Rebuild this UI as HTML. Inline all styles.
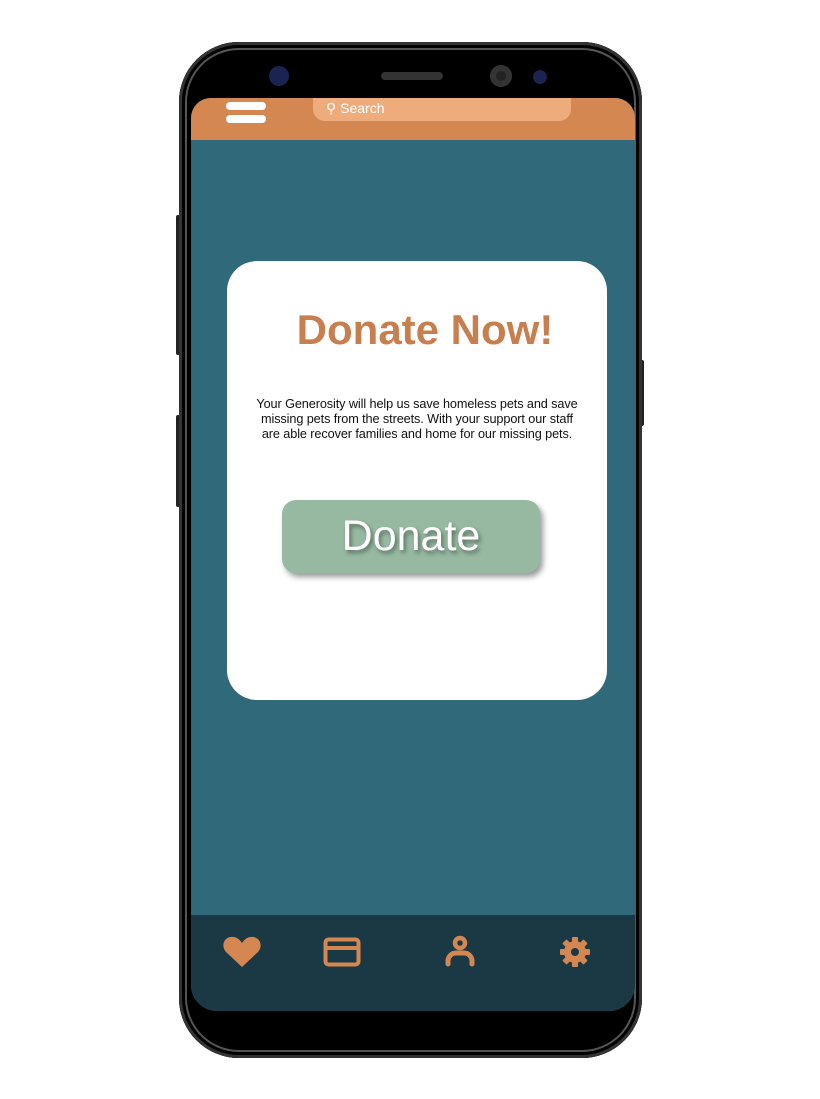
<!DOCTYPE html>
<html><head><style>
body{margin:0;width:820px;height:1099px;background:#fff;position:relative;overflow:hidden;font-family:"Liberation Sans",Arial,sans-serif}
.a{position:absolute}
</style></head><body>
<div class="a" style="left:176px;top:215px;width:6px;height:140px;background:#222;border-radius:2px"></div>
<div class="a" style="left:176px;top:415px;width:6px;height:92px;background:#222;border-radius:2px"></div>
<div class="a" style="left:638px;top:360px;width:6px;height:66px;background:#222;border-radius:2px"></div>
<div class="a" style="left:179px;top:42px;width:463px;height:1016px;background:#000;border-radius:60px;box-shadow:inset 0 0 0 3px #333,inset 0 0 0 6px #000,inset 0 0 0 8px #555"></div>
<div class="a" style="left:191px;top:98px;width:444px;height:913px;border-radius:20px 20px 26px 26px;overflow:hidden;background:#30697a">
  <div class="a" style="left:0;top:0;width:444px;height:42px;background:#d48751"></div>
  <div class="a" style="left:35px;top:4px;width:40px;height:8px;background:#fff;border-radius:5px"></div>
  <div class="a" style="left:35px;top:17px;width:40px;height:8px;background:#fff;border-radius:5px"></div>
  <div class="a" style="left:122px;top:0;width:258px;height:23px;background:#eeac7c;border-radius:0 0 12px 12px"></div>
  <div class="a" style="left:135px;top:2px;color:#fff;font-size:14px">&#9906; Search</div>
  <div class="a" style="left:0;top:817px;width:444px;height:96px;background:#1b3845"></div>
</div>
<svg class="a" style="left:222px;top:935px" width="40" height="34" viewBox="0 0 40 34"><path d="M20 32 L4 17 C-2 10 3 1 11 2 C15 2 18 5 20 8 C22 5 25 2 29 2 C37 1 42 10 36 17 Z" fill="#d48751"/></svg>
<svg class="a" style="left:323px;top:937px" width="38" height="30"><rect x="2.5" y="2.5" width="33" height="25" rx="3" fill="none" stroke="#d48751" stroke-width="4"/><rect x="2" y="9" width="34" height="4" fill="#d48751"/></svg>
<svg class="a" style="left:444px;top:934px" width="32" height="34"><circle cx="16" cy="9" r="5" fill="none" stroke="#d48751" stroke-width="4.5"/><path d="M4 30 V27 A8 8 0 0 1 12 19 H20 A8 8 0 0 1 28 27 V30" fill="none" stroke="#d48751" stroke-width="5" stroke-linecap="round"/></svg>
<svg class="a" style="left:559px;top:936px" width="32" height="32" viewBox="-16 -16 32 32"><g fill="#d48751"><circle r="11"/><g id="t"><rect x="-3" y="-15" width="6" height="7" rx="1"/></g><use href="#t" transform="rotate(45)"/><use href="#t" transform="rotate(90)"/><use href="#t" transform="rotate(135)"/><use href="#t" transform="rotate(180)"/><use href="#t" transform="rotate(225)"/><use href="#t" transform="rotate(270)"/><use href="#t" transform="rotate(315)"/></g><circle r="4" fill="#1b3845"/></svg>
<div class="a" style="left:269px;top:66px;width:20px;height:20px;background:#1b2450;border-radius:50%"></div>
<div class="a" style="left:381px;top:72px;width:62px;height:8px;background:#333;border-radius:4px"></div>
<div class="a" style="left:490px;top:65px;width:22px;height:22px;background:#222;border-radius:50%;box-shadow:inset 0 0 0 6px #333"></div>
<div class="a" style="left:533px;top:70px;width:14px;height:14px;background:#1b2450;border-radius:50%"></div>
<div class="a" style="left:227px;top:261px;width:380px;height:439px;background:#fff;border-radius:30px">
  <div class="a" style="left:0;top:45px;width:396px;text-align:center;color:#c87f4f;font-size:42px;font-weight:bold">Donate Now!</div>
  <div class="a" style="left:0;top:136px;width:380px;text-align:center;color:#111;font-size:12.7px;line-height:15px;letter-spacing:-0.1px">Your Generosity will help us save homeless pets and save<br>missing pets from the streets. With your support our staff<br>are able recover families and home for our missing pets.</div>
  <div class="a" style="left:55px;top:239px;width:258px;height:73px;background:#97b9a1;border-radius:14px;box-shadow:3px 4px 6px rgba(0,0,0,.4);color:#fff;font-size:43px;text-align:center;line-height:73px;text-shadow:2px 3px 4px rgba(0,0,0,.4)">Donate</div>
</div>
</body></html>
